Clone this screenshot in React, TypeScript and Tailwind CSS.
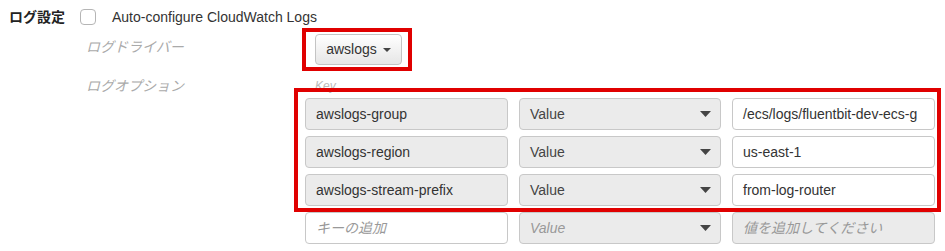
const font = "font-['Liberation_Sans','Noto_Sans_CJK_JP',sans-serif]";

const Caret = () => (
  <svg width="11" height="6" viewBox="0 0 11 6" className="shrink-0">
    <path d="M0 0h11L5.5 6z" fill="#444" />
  </svg>
);

const Field = ({
  text,
  placeholder,
  gray,
}: {
  text?: string;
  placeholder?: string;
  gray?: boolean;
}) => (
  <div
    className={`w-[203px] h-[32px] rounded-[4px] border border-[#c8c8c8] flex items-center px-[10px] overflow-hidden whitespace-nowrap text-[14px] ${
      gray ? "bg-[#ebebeb]" : "bg-white"
    }`}
  >
    {text ? (
      <span className="text-[#333]">{text}</span>
    ) : (
      <span className="italic text-[#999]">{placeholder}</span>
    )}
  </div>
);

const Select = ({ muted }: { muted?: boolean }) => (
  <div className="w-[202px] h-[32px] rounded-[4px] border border-[#c8c8c8] bg-[#ebebeb] flex items-center justify-between pl-[10px] pr-[9px] text-[14px]">
    <span className={muted ? "italic text-[#999]" : "text-[#444]"}>Value</span>
    <Caret />
  </div>
);

const rows = [
  { key: "awslogs-group", value: "/ecs/logs/fluentbit-dev-ecs-g" },
  { key: "awslogs-region", value: "us-east-1" },
  { key: "awslogs-stream-prefix", value: "from-log-router" },
];

export default function App() {
  return (
    <div className={`w-[945px] h-[251px] bg-white overflow-hidden ${font}`}>
      <div className="flex items-center h-[18px] mt-[8px] pl-[9px]">
        <span className="text-[14px] font-bold text-[#222] w-[71px]">ログ設定</span>
        <span className="w-[16px] h-[16px] rounded-[4px] border border-[#b5b5b5] bg-white" />
        <span className="ml-[16px] text-[14px] text-[#333]">Auto-configure CloudWatch Logs</span>
      </div>

      <div className="flex mt-[8px]">
        <div className="w-[315px] pl-[86px] pt-[4px] text-[14px] italic text-[#aaa] leading-[18px]">
          ログドライバー
        </div>
        <div className="relative">
          <div className="h-[31px] w-[87px] rounded-[4px] border border-[#c4c4c4] bg-gradient-to-b from-white to-[#e6e6e6] flex items-center justify-center gap-[6px] text-[14px] text-[#333]">
            awslogs
            <svg width="8" height="4" viewBox="0 0 8 4">
              <path d="M0 0h8L4 4z" fill="#444" />
            </svg>
          </div>
          <div className="absolute -left-[13px] -right-[10px] -top-[6px] -bottom-[6px] border-4 border-[#e00000]" />
        </div>
      </div>

      <div className="flex mt-[12px]">
        <div className="w-[305px] pl-[86px] text-[14px] italic text-[#aaa] leading-[18px]">
          ログオプション
        </div>
        <div className="flex flex-col">
          <div className="h-[18px] pl-[10px] text-[12px] italic text-[#bbb] leading-[18px]">Key</div>
          <div className="relative mt-[3px] flex flex-col gap-[6px]">
            {rows.map((r) => (
              <div key={r.key} className="flex gap-[11px]">
                <Field text={r.key} gray />
                <Select />
                <Field text={r.value} />
              </div>
            ))}
            <div className="absolute -left-[11px] -right-[6px] -top-[10px] -bottom-[6px] border-4 border-[#e00000]" />
          </div>
          <div className="flex gap-[11px] mt-[6px]">
            <Field placeholder="キーの追加" />
            <Select muted />
            <Field placeholder="値を追加してください" gray />
          </div>
        </div>
      </div>
    </div>
  );
}
